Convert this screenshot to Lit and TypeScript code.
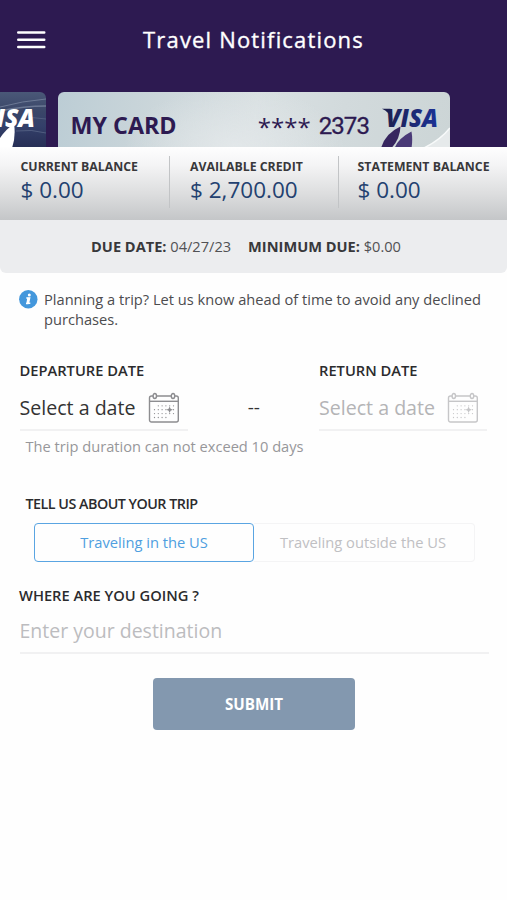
import { LitElement, html, css, svg } from "lit";
import { customElement, property } from "lit/decorators.js";
import { classMap } from "lit/directives/class-map.js";

@customElement("calendar-icon")
export class CalendarIcon extends LitElement {
  static styles = css`
    :host { display: block; width: 32px; height: 32px; }
    svg { display: block; }
  `;

  render() {
    const dots = [];
    for (let row = 0; row < 4; row++) {
      for (let col = 0; col < 6; col++) {
        if ((row === 0 && col === 0) || (row === 3 && col > 3)) continue;
        dots.push(svg`<circle cx=${6.5 + col * 3.8} cy=${13.8 + row * 3.9} r="0.65" />`);
      }
    }
    return html`<svg width="32" height="32" viewBox="0 0 32 32" fill="none" stroke="currentColor" stroke-width="1.4">
      <rect x="1.5" y="4" width="28.8" height="26" rx="2" />
      <path d="M1.5 9.3H30" />
      <g fill="#fff"><ellipse cx="6.8" cy="4" rx="1.7" ry="2.5" /><ellipse cx="25" cy="4" rx="1.7" ry="2.5" /></g>
      <g fill="currentColor" stroke="none">
        ${dots}
        <path d="M21.6 14.4l1 2.3 2.3 1-2.3 1-1 2.3-1-2.3-2.3-1 2.3-1z" />
      </g>
    </svg>`;
  }
}

@customElement("date-field")
export class DateField extends LitElement {
  @property() label = "";
  @property({ type: Boolean, reflect: true }) disabled = false;

  static styles = css`
    :host { display: block; width: 168px; color: #333; }
    .label { font-size: 14.7px; font-weight: 600; line-height: 20px; color: #2b2b2d; }
    .value {
      display: flex; align-items: center; height: 50px; margin-top: 1px;
      border-bottom: 2px solid #f1f1f2; font-size: 19.6px; line-height: 28px;
      padding-top: 5px; box-sizing: border-box;
    }
    .text { width: 128px; }
    calendar-icon { color: #8d8d90; }
    :host([disabled]) .text { color: #b4b4b6; }
    :host([disabled]) calendar-icon { color: #c6c6c8; }
  `;

  render() {
    return html`
      <div class="label">${this.label}</div>
      <div class="value"><span class="text">Select a date</span><calendar-icon></calendar-icon></div>
    `;
  }
}

@customElement("app-root")
export class AppRoot extends LitElement {
  static styles = css`
    :host {
      display: block; width: 507px; height: 900px; overflow: hidden;
      background: #fefefe; color: #333;
      font-family: "Open Sans", "Noto Sans", sans-serif; font-size: 14.65px;
      white-space: nowrap;
    }
    * { box-sizing: border-box; }
    svg { display: block; }

    .top { background: #2d1a51; height: 147px; overflow: hidden; }
    .bar { display: grid; grid-template-columns: 60px 1fr 60px; align-items: center; height: 80px; margin-bottom: 11.5px; }
    .menu { padding-left: 17px; }
    .title { margin: 0 0 2px; text-align: center; color: #fff; font-size: 22px; font-weight: 500; letter-spacing: 1.17px; line-height: 30px; -webkit-text-stroke: 0.35px #fff; }

    .cards { display: flex; gap: 12px; height: 55.5px; }
    .card { border-radius: 6px 6px 0 0; overflow: hidden; flex: none; }
    .previous { width: 46px; border-radius: 0 6px 0 0; }
    .current {
      width: 391.5px; display: flex; color: #2d1a51;
      background:
        radial-gradient(ellipse 110px 60px at 45% 100%, #e2e7e9, #e2e7e900),
        linear-gradient(100deg, #bccdd5 0%, #cbd6da 25%, #d9e0e2 50%, #d2dadc 72%, #ccd5d6 100%);
    }
    .name { padding-left: 12.5px; width: 200px; font-size: 23.3px; font-weight: 700; line-height: 66px; }
    .number { display: flex; align-items: center; height: 68px; width: 117px; font-size: 24px; font-weight: 500; line-height: 68px; }
    .mask { padding-top: 2px; }
    .digits { padding-left: 8px; font-family: Roboto, sans-serif; font-size: 24px; font-weight: 400; letter-spacing: -0.9px; -webkit-text-stroke: 0.3px #2d1a51; }

    .balances { display: flex; height: 72.5px; padding: 9px 0 12px; background: linear-gradient(#fefefe 0%, #f4f4f5 25%, #dcddde 65%, #c4c6c8 100%); }
    .balance { width: 169.5px; padding: 1.5px 0 0 20.5px; border-right: 1px solid #c2c4c6; }
    .balance:last-child { width: 168px; padding-left: 18.5px; border: 0; }
    .caption { font-size: 12.3px; font-weight: 700; line-height: 18.5px; color: #38383b; }
    .amount { font-size: 22.5px; line-height: 28px; color: #234170; }

    .due { display: flex; justify-content: center; gap: 17px; height: 53px; padding-right: 15px; background: #ecedef; border-radius: 0 0 6px 6px; font-size: 14.6px; line-height: 52px; color: #515154; }
    .due b { color: #38383b; }

    .notice { display: flex; gap: 6px; margin: 16px 0 0 19px; line-height: 20px; color: #4c4c4f; }
    .notice p { margin: 0; }
    .dates { display: flex; margin: 31.5px 19px 0 19.5px; height: 71px; }
    .dash { width: 131.5px; padding: 37px 0 0 1px; text-align: center; font-size: 19px; line-height: 20px; }
    .hint { padding-left: 25.5px; margin-top: 4.5px; line-height: 20px; color: #97979a; }

    .section { font-weight: 600; line-height: 20px; color: #2b2b2d; }
    .trip { margin: 38px 0 0 25.5px; font-size: 14.3px; letter-spacing: -0.5px; }
    .options { display: flex; margin: 9px 0 0 34px; }
    .option {
      height: 39px; width: 221px; font: inherit; font-size: 14.7px; color: #c0c0c3; background: none;
      border: 1.4px solid #f4f4f5; border-left: 0; border-radius: 0 4px 4px 0; padding: 0 2px 0 0;
    }
    .option.chosen { width: 220px; color: #4f9fe0; border: 1.4px solid #5aa5e2; border-radius: 4px; padding: 0; }
    .where { margin: 23px 0 0 19px; font-size: 14.7px; }
    .destination { margin: 11px 18.5px 0 19.5px; height: 38.5px; border-bottom: 2px solid #f1f1f2; font-size: 19.5px; line-height: 29px; color: #bcbcbf; }
    .submit {
      display: block; width: 202px; height: 51.5px; margin: 24px 0 0 153px; padding: 0;
      border: 0; border-radius: 4px; background: #8398af; color: #fff; font: inherit; font-size: 15.2px; font-weight: 700;
    }
  `;

  private balances: [string, string][] = [
    ["CURRENT BALANCE", "$ 0.00"],
    ["AVAILABLE CREDIT", "$ 2,700.00"],
    ["STATEMENT BALANCE", "$ 0.00"],
  ];

  private options = ["Traveling in the US", "Traveling outside the US"];

  private previousCard() {
    return html`<svg width="46" height="56" viewBox="0 0 46 56">
      <defs>
        <linearGradient id="night" x1="0" y1="0" x2="0" y2="1">
          <stop offset="0" stop-color="#4a5878" /><stop offset="0.35" stop-color="#3a4668" />
          <stop offset="0.6" stop-color="#34406a" /><stop offset="1" stop-color="#262e55" />
        </linearGradient>
      </defs>
      <rect width="46" height="56" fill="url(#night)" />
      <g fill="none" stroke="#8f9db4" stroke-opacity="0.55">
        <path d="M0 15Q22 9 46 7" /><path d="M0 19Q24 14 46 14" stroke-width="1.5" />
        <path d="M22 26Q34 25 46 27" stroke-opacity="0.3" /><path d="M16 39Q32 37 46 41" stroke-opacity="0.35" />
      </g>
      <text x="-19" y="34.5" textLength="54" lengthAdjust="spacingAndGlyphs" font-family="Open Sans" font-size="24" font-weight="800" font-style="italic" fill="#fff">VISA</text>
      <path d="M0 46Q6 37 14 32Q16 44 12 56H0z" fill="#fff" />
    </svg>`;
  }

  private visaMark() {
    return html`<svg width="75" height="56" viewBox="375 91.5 75 56">
      <defs>
        <linearGradient id="ink"><stop offset="0" stop-color="#1d2050" /><stop offset="1" stop-color="#1b3296" /></linearGradient>
      </defs>
      <path d="M424 148Q440 140 450 128V148z" fill="#e6eaeb" />
      <path d="M423 148Q440 140 450 127.500" fill="none" stroke="#f8fafa" stroke-width="1.500" />
      <path d="M382 108.300H390.500L392.500 120Q389 111 382 108.300z" fill="#1d2050" />
      <text x="386" y="126.500" textLength="52" lengthAdjust="spacingAndGlyphs" font-family="Open Sans" font-size="25" font-weight="800" font-style="italic" fill="url(#ink)">VISA</text>
      <path d="M400.500 126Q385 133 381 148H391Q400 139 400.500 126z" fill="#37265f" />
      <path d="M411.500 131Q398 138 394.500 148H411.500Q413 139 411.500 131z" fill="#4a3a77" />
    </svg>`;
  }

  render() {
    return html`
      <div class="top">
        <header class="bar">
          <div class="menu">
            <svg width="29" height="20" viewBox="0 0 29 20" stroke="#fff" stroke-width="2.400" stroke-linecap="round">
              <path d="M1.200 2.500H27.300M1.200 9.800H27.300M1.200 17H27.300" />
            </svg>
          </div>
          <h1 class="title">Travel Notifications</h1>
        </header>
        <div class="cards">
          <div class="card previous">${this.previousCard()}</div>
          <div class="card current">
            <div class="name">MY CARD</div>
            <div class="number"><span class="mask">****</span><span class="digits">2373</span></div>
            ${this.visaMark()}
          </div>
        </div>
      </div>

      <div class="balances">
        ${this.balances.map(([caption, amount]) => html`
          <div class="balance"><div class="caption">${caption}</div><div class="amount">${amount}</div></div>
        `)}
      </div>
      <div class="due">
        <span><b>DUE DATE:</b> 04/27/23</span><span><b>MINIMUM DUE:</b> $0.00</span>
      </div>

      <div class="notice">
        <svg width="19" height="20" viewBox="0 0 19 20">
          <circle cx="9.300" cy="10.300" r="9.200" fill="#4397dc" />
          <circle cx="10.300" cy="6" r="1.500" fill="#fff" />
          <path d="M7.300 9H10.600L9.300 14.300H11.300M7 14.500H9.500" fill="none" stroke="#fff" stroke-width="1.500" />
          <path d="M8.300 8.800H11L9.600 14.800H7.300z" fill="#fff" />
        </svg>
        <p>Planning a trip? Let us know ahead of time to avoid any declined<br />purchases.</p>
      </div>

      <div class="dates">
        <date-field label="DEPARTURE DATE"></date-field>
        <div class="dash">--</div>
        <date-field label="RETURN DATE" disabled></date-field>
      </div>
      <div class="hint">The trip duration can not exceed 10 days</div>

      <div class="section trip">TELL US ABOUT YOUR TRIP</div>
      <div class="options">
        ${this.options.map((name, i) => html`<button class=${classMap({ option: true, chosen: i === 0 })}>${name}</button>`)}
      </div>

      <div class="section where">WHERE ARE YOU GOING ?</div>
      <div class="destination">Enter your destination</div>
      <button class="submit">SUBMIT</button>
    `;
  }
}
